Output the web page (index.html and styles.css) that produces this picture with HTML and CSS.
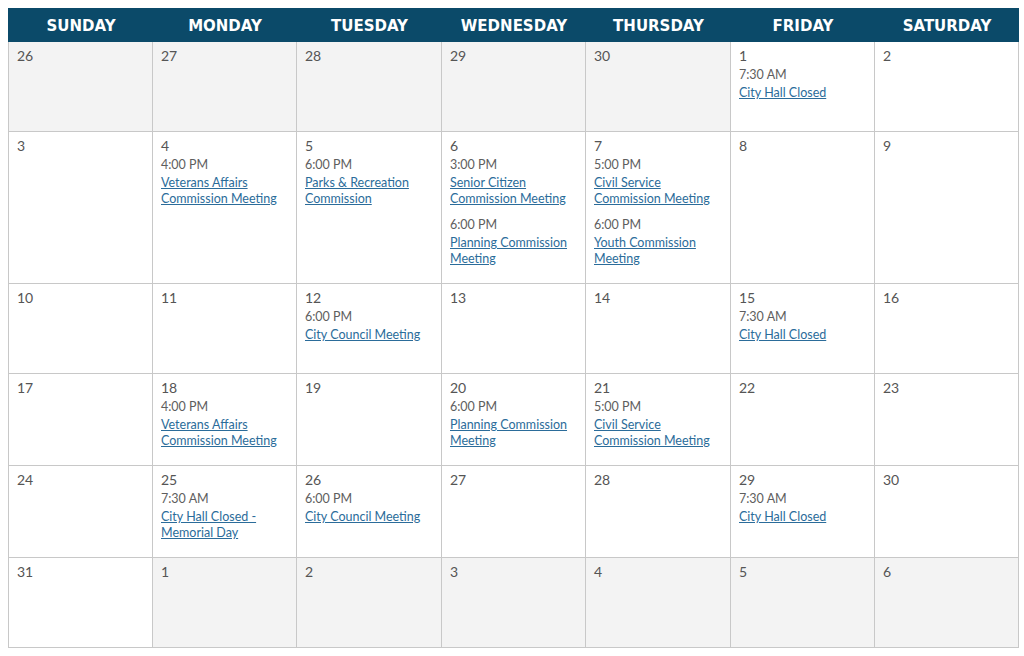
FILE: index.html
```html
<!DOCTYPE html>
<html>
<head>
<meta charset="utf-8">
<link rel="stylesheet" href="styles.css">
</head>
<body>
<div class="calendar">
  <div class="head">SUNDAY</div>
  <div class="head">MONDAY</div>
  <div class="head">TUESDAY</div>
  <div class="head">WEDNESDAY</div>
  <div class="head">THURSDAY</div>
  <div class="head">FRIDAY</div>
  <div class="head">SATURDAY</div>

  <div class="cell other"><div class="day">26</div></div>
  <div class="cell other"><div class="day">27</div></div>
  <div class="cell other"><div class="day">28</div></div>
  <div class="cell other"><div class="day">29</div></div>
  <div class="cell other"><div class="day">30</div></div>
  <div class="cell"><div class="day">1</div>
    <div class="event"><div class="time">7:30 AM</div><a href="#">City Hall Closed</a></div></div>
  <div class="cell"><div class="day">2</div></div>

  <div class="cell"><div class="day">3</div></div>
  <div class="cell"><div class="day">4</div>
    <div class="event"><div class="time">4:00 PM</div><a href="#">Veterans Affairs Commission Meeting</a></div></div>
  <div class="cell"><div class="day">5</div>
    <div class="event"><div class="time">6:00 PM</div><a href="#">Parks &amp; Recreation Commission</a></div></div>
  <div class="cell"><div class="day">6</div>
    <div class="event"><div class="time">3:00 PM</div><a href="#">Senior Citizen Commission Meeting</a></div>
    <div class="event"><div class="time">6:00 PM</div><a href="#">Planning Commission Meeting</a></div></div>
  <div class="cell"><div class="day">7</div>
    <div class="event"><div class="time">5:00 PM</div><a href="#">Civil Service Commission Meeting</a></div>
    <div class="event"><div class="time">6:00 PM</div><a href="#">Youth Commission Meeting</a></div></div>
  <div class="cell"><div class="day">8</div></div>
  <div class="cell"><div class="day">9</div></div>

  <div class="cell"><div class="day">10</div></div>
  <div class="cell"><div class="day">11</div></div>
  <div class="cell"><div class="day">12</div>
    <div class="event"><div class="time">6:00 PM</div><a href="#">City Council Meeting</a></div></div>
  <div class="cell"><div class="day">13</div></div>
  <div class="cell"><div class="day">14</div></div>
  <div class="cell"><div class="day">15</div>
    <div class="event"><div class="time">7:30 AM</div><a href="#">City Hall Closed</a></div></div>
  <div class="cell"><div class="day">16</div></div>

  <div class="cell"><div class="day">17</div></div>
  <div class="cell"><div class="day">18</div>
    <div class="event"><div class="time">4:00 PM</div><a href="#">Veterans Affairs Commission Meeting</a></div></div>
  <div class="cell"><div class="day">19</div></div>
  <div class="cell"><div class="day">20</div>
    <div class="event"><div class="time">6:00 PM</div><a href="#">Planning Commission Meeting</a></div></div>
  <div class="cell"><div class="day">21</div>
    <div class="event"><div class="time">5:00 PM</div><a href="#">Civil Service Commission Meeting</a></div></div>
  <div class="cell"><div class="day">22</div></div>
  <div class="cell"><div class="day">23</div></div>

  <div class="cell"><div class="day">24</div></div>
  <div class="cell"><div class="day">25</div>
    <div class="event"><div class="time">7:30 AM</div><a href="#">City Hall Closed - Memorial Day</a></div></div>
  <div class="cell"><div class="day">26</div>
    <div class="event"><div class="time">6:00 PM</div><a href="#">City Council Meeting</a></div></div>
  <div class="cell"><div class="day">27</div></div>
  <div class="cell"><div class="day">28</div></div>
  <div class="cell"><div class="day">29</div>
    <div class="event"><div class="time">7:30 AM</div><a href="#">City Hall Closed</a></div></div>
  <div class="cell"><div class="day">30</div></div>

  <div class="cell"><div class="day">31</div></div>
  <div class="cell other"><div class="day">1</div></div>
  <div class="cell other"><div class="day">2</div></div>
  <div class="cell other"><div class="day">3</div></div>
  <div class="cell other"><div class="day">4</div></div>
  <div class="cell other"><div class="day">5</div></div>
  <div class="cell other"><div class="day">6</div></div>
</div>
</body>
</html>
```

FILE: styles.css
```css
html, body {
  margin: 0;
  padding: 0;
  background: #ffffff;
}
body {
  padding: 8px 6px 0 8px;
  font-family: Lato, "Open Sans", sans-serif;
}
.calendar {
  width: 1010px;
  display: grid;
  grid-template-columns: 144px 144px 145px 144px 145px 144px 144px;
  border-left: 1px solid #c8c8c8;
}
.head {
  background: #0b4a69;
  color: #ffffff;
  font-family: "DejaVu Sans", sans-serif;
  font-weight: bold;
  font-size: 15px;
  text-align: center;
  height: 34px;
  box-sizing: border-box;
  padding-top: 2px;
  line-height: 32px;
  margin-left: -1px;
  padding-left: 1px;
}
.cell {
  min-height: 90px;
  box-sizing: border-box;
  padding: 4px 8px 16px 8px;
  border-right: 1px solid #c8c8c8;
  border-bottom: 1px solid #c8c8c8;
  background: #ffffff;
}
.cell.other {
  background: #f3f3f3;
}
.day {
  font-size: 14px;
  line-height: 19px;
  color: #555555;
}
.event + .event {
  margin-top: 8px;
}
.time {
  font-size: 12.5px;
  line-height: 20px;
  color: #5e5e5e;
}
.event a {
  display: block;
  font-size: 12.5px;
  line-height: 16px;
  color: #2b6c9a;
  text-decoration: underline;
}
```
